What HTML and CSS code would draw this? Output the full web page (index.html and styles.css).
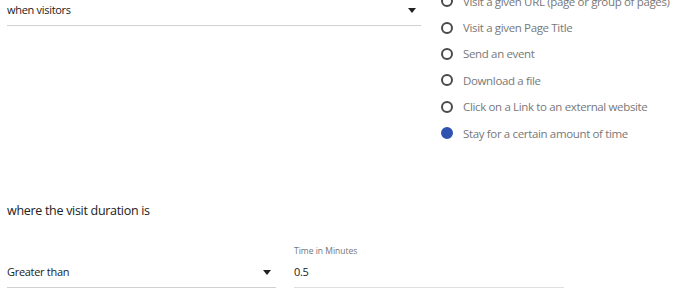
FILE: index.html
```html
<!DOCTYPE html>
<html>
<head>
    <title>Goal trigger</title>
    <link rel="stylesheet" href="styles.css">
</head>
<body>
    <div class="trigger">
        <div class="field select-field">
            <span class="value">when visitors</span>
            <span class="caret"></span>
        </div>
        <ul class="radios">
            <li class="radio"><span class="dot"></span>Visit a given URL (page or group of pages)</li>
            <li class="radio"><span class="dot"></span>Visit a given Page Title</li>
            <li class="radio"><span class="dot"></span>Send an event</li>
            <li class="radio"><span class="dot"></span>Download a file</li>
            <li class="radio"><span class="dot"></span>Click on a Link to an external website</li>
            <li class="radio checked"><span class="dot"></span>Stay for a certain amount of time</li>
        </ul>
    </div>

    <h3 class="condition">where the visit duration is</h3>

    <div class="duration">
        <div class="field select-field narrow">
            <span class="value">Greater than</span>
            <span class="caret"></span>
        </div>
        <div class="input-wrap">
            <label class="small-label">Time in Minutes</label>
            <div class="field text-field">
                <span class="value">0.5</span>
            </div>
        </div>
    </div>
</body>
</html>
```

FILE: styles.css
```css
body {
    margin: 0;
    padding: 0 0 0 7px;
    font-family: "Open Sans", Arial, sans-serif;
    font-size: 11px;
    letter-spacing: -0.3px;
    color: #212121;
    background: #fff;
    overflow: hidden;
}
.trigger {
    display: grid;
    grid-template-columns: 414px 1fr;
    column-gap: 20px;
    margin-top: -12px;
}
.field {
    display: flex;
    align-items: center;
    justify-content: space-between;
    border-bottom: 1px solid #d0d0d0;
    line-height: 20px;
    padding: 0 5px 5px 0;
}
.select-field {
    padding-top: 12px;
    align-self: start;
}
.caret {
    width: 0;
    height: 0;
    border-left: 4px solid transparent;
    border-right: 4px solid transparent;
    border-top: 5px solid #222;
}
.radios {
    list-style: none;
    margin: 0;
    padding: 0;
}
.radio {
    display: flex;
    align-items: center;
    height: 26.4px;
    white-space: nowrap;
    font-size: 11.5px;
    letter-spacing: -0.35px;
    color: #787878;
}
.dot {
    box-sizing: border-box;
    width: 12px;
    height: 12px;
    border: 2px solid #4a4a4a;
    border-radius: 50%;
    margin-right: 10px;
}
.radio.checked .dot {
    border-color: #2f52b0;
    background: #2f52b0;
}
.condition {
    font-weight: normal;
    font-size: 12.5px;
    letter-spacing: -0.3px;
    line-height: 20px;
    margin: 55px 0 0;
}
.duration {
    display: flex;
    align-items: flex-end;
    gap: 18px;
    margin-top: 24px;
}
.narrow {
    width: 264px;
    padding-top: 0;
    align-self: end;
}
.input-wrap {
    width: 270px;
}
.small-label {
    display: block;
    font-size: 8.5px;
    letter-spacing: 0;
    color: #757575;
    line-height: 12px;
    margin-bottom: 5px;
}
.text-field {
    border-bottom-color: #e0e0e0;
}
```
